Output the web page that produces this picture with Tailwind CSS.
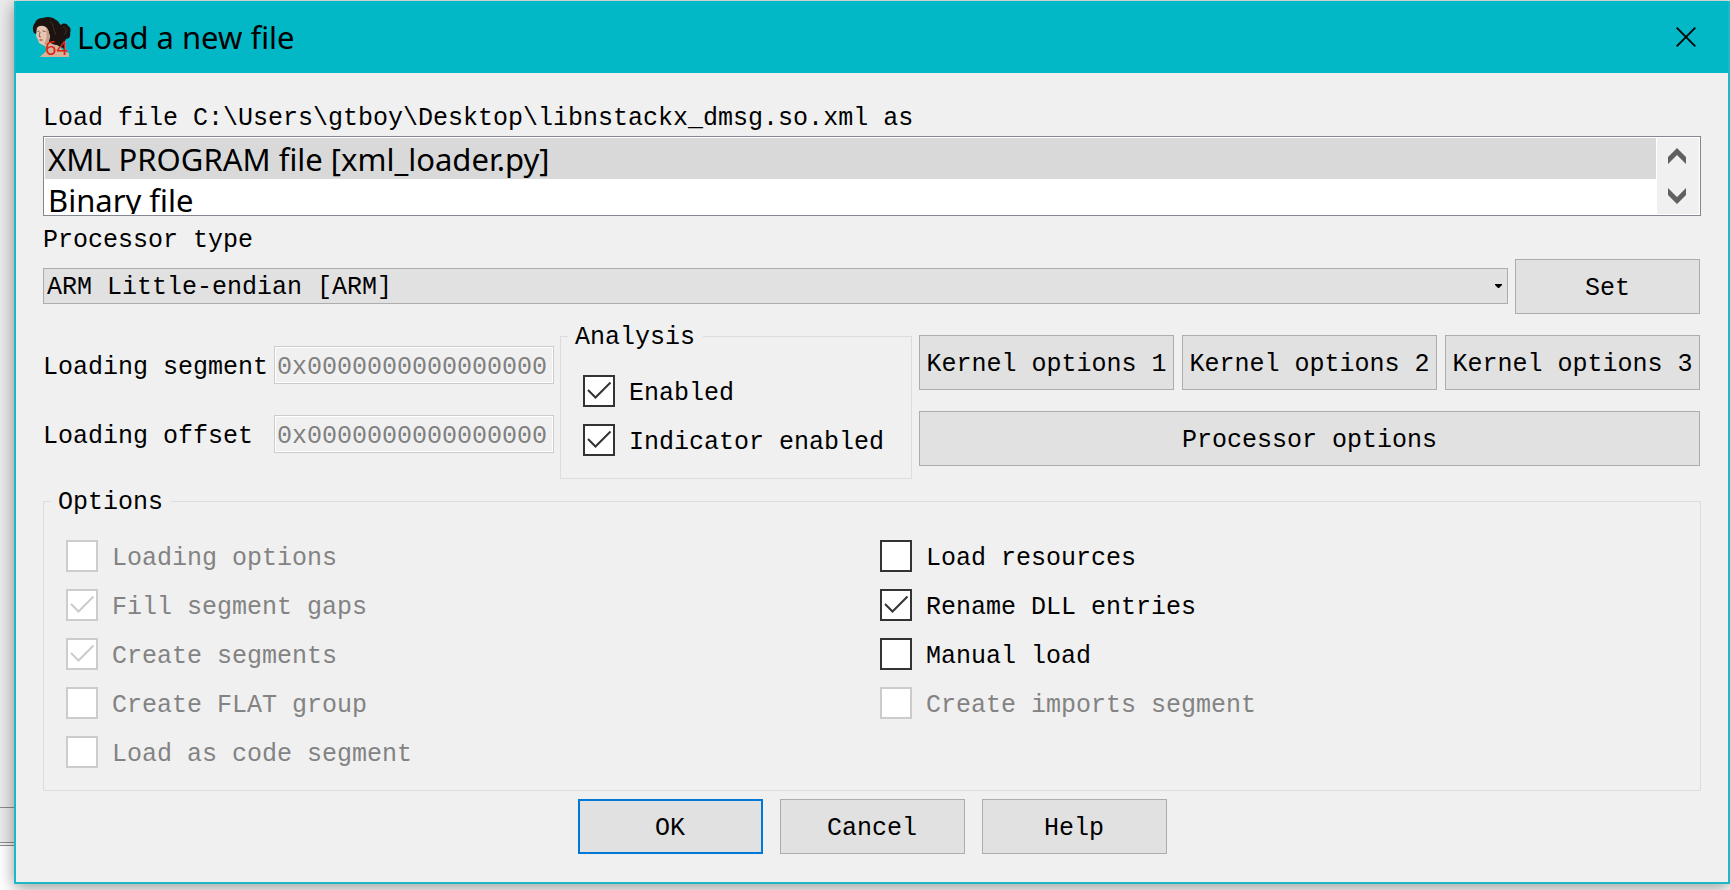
<!DOCTYPE html>
<html lang="en">
<head>
<meta charset="utf-8">
<title>Load a new file</title>
<script src="https://cdn.jsdelivr.net/npm/@tailwindcss/browser@4"></script>
</head>
<body class="grid min-h-screen overflow-hidden bg-white font-['Liberation_Mono',monospace] text-[25px] leading-[26px] text-black">

  <!-- window behind the dialog -->
  <div class="col-start-1 row-start-1 flex flex-col" aria-hidden="true">
    <div class="flex-1 bg-[#ebebeb]"></div>
    <div class="h-[35px] border-t border-[#8c8c8c] bg-[#ebebeb]"></div>
    <div class="h-1 border-y border-[#8c8c8c] bg-[#f4f4f4]"></div>
    <div class="h-11 bg-white"></div>
  </div>

  <main role="dialog" aria-labelledby="title" class="z-10 col-start-1 row-start-1 mt-px ml-3.5 flex flex-col self-start border-2 border-t-0 border-[#1bb9c6] bg-[#f0f0f0] shadow-[0_4px_16px_rgba(0,0,0,0.4)]">
    <header class="flex h-18 items-center bg-[#02b7c6] pr-8 pl-[17px]">
      <svg class="h-10 w-[38px] overflow-visible" viewBox="0 0 38 40" aria-hidden="true">
        <path d="M7 40 C9 37 12 36 13 34 L12 26 L24 24 C25 30 30 34 36 36 V40 Z" fill="#d9b09a"/>
        <path d="M1 16 C-1 12 0 8 2 6 C3 2 7 1 10 1 C14 -1 20 0 23 3 C26 4 26 7 28 8 C30 6 34 6 35 9 C38 10 38 14 37 16 C38 19 36 22 33 22 C32 24 31 25 30 26 C31 28 33 30 32 32 C29 31 26 29 24 28 C21 28 18 26 16 25 L10 12 L5 10 C4 12 4 15 3 17 Z" fill="#1d1412"/>
        <path d="M4 11 C6 8 11 8 14 11 C16 14 16 17 17 19 C17 22 15 25 15 30 C12 29 9 28 8 27 C6 27 6 25 5 23 L3 19 C4 16 3 14 4 11 Z" fill="#e6c6b2"/>
        <path d="M13 11 C16 13 17 18 16 23 L15 29 L11 27 C14 23 14 17 13 11 Z" fill="#c79b84"/>
        <path d="M4.500 14.500 L6.500 14 M9.500 14 L12.500 14.500 M7 15 L6 19.500 L8 20" fill="none" stroke="#7d5040" stroke-width=".9"/>
        <path d="M6.500 23 L9.500 23" stroke="#b04a3c" stroke-width="1.300"/>
        <path d="M17 4 C21 7 20 13 23 18 M30 10 C34 11 34 15 31 18" fill="none" stroke="#40302a"/>
        <text x="12" y="38" font-family="Noto Sans, sans-serif" font-size="20" fill="#dc2410">64</text>
      </svg>
      <h1 id="title" class="ml-1.5 font-['Noto_Sans',sans-serif] text-[31px] leading-10">Load a new file</h1>
      <button type="button" aria-label="Close" class="ml-auto">
        <svg class="size-5" viewBox="0 0 20 20" fill="none" stroke="#000" stroke-width="1.800" aria-hidden="true"><path d="M.7 .7 L19.300 19.300 M19.300 .7 L.7 19.300"/></svg>
      </button>
    </header>

    <form class="flex flex-col px-[27px] pt-7 pb-7">
      <label for="loader" class="mb-1 pt-[5px]">Load file C:\Users\gtboy\Desktop\libnstackx_dmsg.so.xml as</label>
      <div class="flex h-20 gap-px border border-[#828790] bg-white p-px">
        <select id="loader" size="2" class="min-w-0 flex-1 appearance-none overflow-hidden bg-white font-['Noto_Sans',sans-serif] text-[31px] leading-[41px] outline-none">
          <option selected class="h-[41px] bg-linear-to-r from-[#d9d9d9] to-[#d9d9d9] p-0 pl-[3px] leading-[41px] text-black">XML PROGRAM file [xml_loader.py]</option>
          <option class="h-[41px] p-0 pl-[3px] leading-[41px] text-black">Binary file</option>
        </select>
        <div class="flex w-[42px] flex-col justify-between bg-[#f0f0f0] py-2.5 pr-0.5">
          <button type="button" aria-label="Scroll up" class="flex justify-center"><svg class="h-4 w-[18px]" viewBox="0 0 18 16" fill="#606060"><path d="M9 0 L18 9 V16 L9 7 L0 16 V9 Z"/></svg></button>
          <button type="button" aria-label="Scroll down" class="flex justify-center"><svg class="h-4 w-[18px]" viewBox="0 0 18 16" fill="#606060"><path d="M9 16 L18 7 V0 L9 9 L0 0 V7 Z"/></svg></button>
        </div>
      </div>

      <label for="processor" class="mt-[7px] mb-[5px] pt-[5px]">Processor type</label>
      <div class="flex items-start gap-[7px]">
        <div class="mt-[9px] grid flex-1 items-center">
          <select id="processor" class="col-start-1 row-start-1 h-9 w-full appearance-none border border-[#adadad] bg-[#e1e1e1] pt-1 pl-[3px]"><option>ARM Little-endian [ARM]</option></select>
          <svg class="pointer-events-none col-start-1 row-start-1 mr-1.5 h-1 w-[7px] justify-self-end" viewBox="0 0 7 4" aria-hidden="true"><path d="M0 0 H7 V1 L4 4 H3 L0 1 Z"/></svg>
        </div>
        <button type="button" class="mr-px h-[55px] w-[185px] border border-[#adadad] bg-[#e1e1e1] pt-[5px]">Set</button>
      </div>

      <div class="mt-[7px] flex items-start">
        <div class="grid grid-cols-[231px_280px] items-center gap-y-[31px] pt-[25px]">
          <label for="segment" class="pt-[5px] whitespace-nowrap">Loading segment</label>
          <input id="segment" disabled value="0x0000000000000000" class="h-[38px] w-full border border-[#cccccc] bg-[#f0f0f0] pt-1 pl-0.5 text-[#808080] inset-ring inset-ring-white">
          <label for="offset" class="pt-[5px] whitespace-nowrap">Loading offset</label>
          <input id="offset" disabled value="0x0000000000000000" class="h-[38px] w-full border border-[#cccccc] bg-[#f0f0f0] pt-1 pl-0.5 text-[#808080] inset-ring inset-ring-white">
        </div>

        <fieldset class="ml-1.5 flex w-[352px] shrink-0 flex-col gap-[17px] border border-[#dcdcdc] px-[22px] pt-6 pb-[22px]">
          <legend class="-ml-[15px] pt-1 pr-2 pl-[7px]">Analysis</legend>
          <label class="flex h-8 items-center gap-3.5"><span class="grid size-8"><input type="checkbox" checked class="peer col-start-1 row-start-1 size-8 appearance-none border-2 border-[#333333] bg-white"><svg class="pointer-events-none invisible col-start-1 row-start-1 size-8 peer-checked:visible" viewBox="0 0 32 32" fill="none" stroke="#333333" stroke-width="2"><path d="M5 15 L12.500 22.500 L27.500 7.500"/></svg></span><span class="pt-[5px]">Enabled</span></label>
          <label class="flex h-8 items-center gap-3.5"><span class="grid size-8"><input type="checkbox" checked class="peer col-start-1 row-start-1 size-8 appearance-none border-2 border-[#333333] bg-white"><svg class="pointer-events-none invisible col-start-1 row-start-1 size-8 peer-checked:visible" viewBox="0 0 32 32" fill="none" stroke="#333333" stroke-width="2"><path d="M5 15 L12.500 22.500 L27.500 7.500"/></svg></span><span class="pt-[5px]">Indicator enabled</span></label>
        </fieldset>

        <div class="mr-px ml-[7px] grid flex-1 grid-cols-3 gap-x-2 gap-y-[21px] pt-3.5">
          <button type="button" class="h-[55px] border border-[#adadad] bg-[#e1e1e1] pt-[5px] whitespace-nowrap">Kernel options 1</button>
          <button type="button" class="h-[55px] border border-[#adadad] bg-[#e1e1e1] pt-[5px] whitespace-nowrap">Kernel options 2</button>
          <button type="button" class="h-[55px] border border-[#adadad] bg-[#e1e1e1] pt-[5px] whitespace-nowrap">Kernel options 3</button>
          <button type="button" class="col-span-3 h-[55px] border border-[#adadad] bg-[#e1e1e1] pt-[5px]">Processor options</button>
        </div>
      </div>

      <fieldset class="mt-[7px] border border-[#dcdcdc] px-[22px] pt-6 pb-[22px]">
        <legend class="-ml-[15px] pt-1 pr-2 pl-[7px]">Options</legend>
        <div class="grid grid-cols-2 gap-4">
          <div class="flex flex-col gap-[17px] text-[#838383]">
            <label class="flex h-8 items-center gap-3.5"><input type="checkbox" disabled class="size-8 appearance-none border-2 border-[#cccccc] bg-white"><span class="pt-[5px]">Loading options</span></label>
            <label class="flex h-8 items-center gap-3.5"><span class="grid size-8"><input type="checkbox" checked disabled class="peer col-start-1 row-start-1 size-8 appearance-none border-2 border-[#cccccc] bg-white"><svg class="pointer-events-none invisible col-start-1 row-start-1 size-8 peer-checked:visible" viewBox="0 0 32 32" fill="none" stroke="#cccccc" stroke-width="2"><path d="M5 15 L12.500 22.500 L27.500 7.500"/></svg></span><span class="pt-[5px]">Fill segment gaps</span></label>
            <label class="flex h-8 items-center gap-3.5"><span class="grid size-8"><input type="checkbox" checked disabled class="peer col-start-1 row-start-1 size-8 appearance-none border-2 border-[#cccccc] bg-white"><svg class="pointer-events-none invisible col-start-1 row-start-1 size-8 peer-checked:visible" viewBox="0 0 32 32" fill="none" stroke="#cccccc" stroke-width="2"><path d="M5 15 L12.500 22.500 L27.500 7.500"/></svg></span><span class="pt-[5px]">Create segments</span></label>
            <label class="flex h-8 items-center gap-3.5"><input type="checkbox" disabled class="size-8 appearance-none border-2 border-[#cccccc] bg-white"><span class="pt-[5px]">Create FLAT group</span></label>
            <label class="flex h-8 items-center gap-3.5"><input type="checkbox" disabled class="size-8 appearance-none border-2 border-[#cccccc] bg-white"><span class="pt-[5px]">Load as code segment</span></label>
          </div>
          <div class="flex flex-col gap-[17px]">
            <label class="flex h-8 items-center gap-3.5"><input type="checkbox" class="size-8 appearance-none border-2 border-[#333333] bg-white"><span class="pt-[5px]">Load resources</span></label>
            <label class="flex h-8 items-center gap-3.5"><span class="grid size-8"><input type="checkbox" checked class="peer col-start-1 row-start-1 size-8 appearance-none border-2 border-[#333333] bg-white"><svg class="pointer-events-none invisible col-start-1 row-start-1 size-8 peer-checked:visible" viewBox="0 0 32 32" fill="none" stroke="#333333" stroke-width="2"><path d="M5 15 L12.500 22.500 L27.500 7.500"/></svg></span><span class="pt-[5px]">Rename DLL entries</span></label>
            <label class="flex h-8 items-center gap-3.5"><input type="checkbox" class="size-8 appearance-none border-2 border-[#333333] bg-white"><span class="pt-[5px]">Manual load</span></label>
            <label class="flex h-8 items-center gap-3.5 text-[#838383]"><input type="checkbox" disabled class="size-8 appearance-none border-2 border-[#cccccc] bg-white"><span class="pt-[5px]">Create imports segment</span></label>
          </div>
        </div>
      </fieldset>

      <div class="mt-2 flex justify-center gap-[17px]">
        <button type="button" class="h-[55px] w-[185px] border-2 border-[#0078d7] bg-[#e1e1e1] pt-[5px]">OK</button>
        <button type="button" class="h-[55px] w-[185px] border border-[#adadad] bg-[#e1e1e1] pt-[5px]">Cancel</button>
        <button type="button" class="h-[55px] w-[185px] border border-[#adadad] bg-[#e1e1e1] pt-[5px]">Help</button>
      </div>
    </form>
  </main>
</body>
</html>
